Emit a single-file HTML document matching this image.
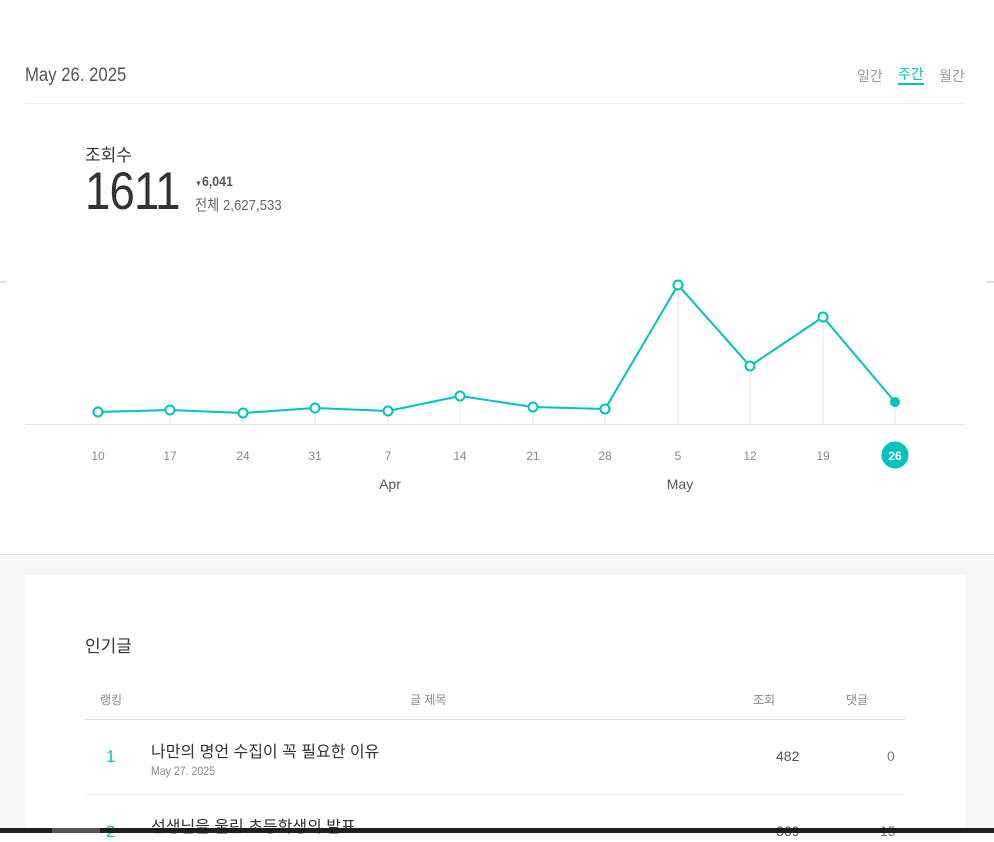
<!DOCTYPE html>
<html><head><meta charset="utf-8"><style>
*{margin:0;padding:0;box-sizing:border-box}
body{width:994px;height:833px;overflow:hidden;background:#fff;font-family:"Liberation Sans","Noto Sans CJK KR",sans-serif;position:relative;color:#333}
.a{position:absolute;white-space:nowrap}
.n{transform-origin:left top;transform:scaleX(0.88)}
</style></head><body>
<div class="a n" style="left:25px;top:65px;font-size:19px;color:#555">May 26. 2025</div>
<div class="a" style="left:857px;top:66px;font-size:14px;color:#999">일간</div>
<div class="a" style="left:898px;top:66px;font-size:14px;color:#00c3bd;border-bottom:2px solid #00c3bd;line-height:17px">주간</div>
<div class="a" style="left:939px;top:66px;font-size:14px;color:#999">월간</div>
<div class="a" style="left:25px;top:103px;width:940px;height:1px;background:#eee"></div>
<div class="a" style="left:85px;top:141px;font-size:17px;color:#333">조회수</div>
<div class="a" style="left:85px;top:161px;font-size:53px;color:#333;transform-origin:left top;transform:scaleX(0.86);letter-spacing:-1px">1611</div>
<div class="a n" style="left:195px;top:173px;font-size:14px;color:#555;font-weight:bold"><span style="font-size:8px">▼</span>6,041</div>
<div class="a n" style="left:195px;top:194px;font-size:15px;color:#666">전체 2,627,533</div>
<svg class="a" style="left:0;top:0" width="994" height="520">
<line x1="0" y1="282" x2="6" y2="282" stroke="#bbb"/>
<line x1="987" y1="282" x2="994" y2="282" stroke="#bbb"/>
<line x1="25" y1="424.5" x2="965" y2="424.5" stroke="#e5e5e5"/>
<g stroke="#e5e5e5">
<line x1="98" y1="412" x2="98" y2="424"/><line x1="170" y1="410" x2="170" y2="424"/><line x1="243" y1="413" x2="243" y2="424"/><line x1="315" y1="408" x2="315" y2="424"/><line x1="388" y1="411" x2="388" y2="424"/><line x1="460" y1="396" x2="460" y2="424"/><line x1="533" y1="407" x2="533" y2="424"/><line x1="605" y1="409" x2="605" y2="424"/><line x1="678" y1="285" x2="678" y2="424"/><line x1="750" y1="366" x2="750" y2="424"/><line x1="823" y1="317" x2="823" y2="424"/><line x1="895" y1="402" x2="895" y2="424"/>
</g>
<polyline fill="none" stroke="#00c3bd" stroke-width="2" points="98,412 170,410 243,413 315,408 388,411 460,396 533,407 605,409 678,285 750,366 823,317 895,402"/>
<g fill="#fff" stroke="#00c3bd" stroke-width="2">
<circle cx="98" cy="412" r="4.5"/><circle cx="170" cy="410" r="4.5"/><circle cx="243" cy="413" r="4.5"/><circle cx="315" cy="408" r="4.5"/><circle cx="388" cy="411" r="4.5"/><circle cx="460" cy="396" r="4.5"/><circle cx="533" cy="407" r="4.5"/><circle cx="605" cy="409" r="4.5"/><circle cx="678" cy="285" r="4.5"/><circle cx="750" cy="366" r="4.5"/><circle cx="823" cy="317" r="4.5"/>
</g>
<circle cx="895" cy="402" r="5" fill="#00c3bd"/>
<circle cx="895" cy="455" r="13.5" fill="#00c3bd"/>
<g font-family="Liberation Sans, sans-serif" font-size="12" fill="#888" text-anchor="middle">
<text x="98" y="460">10</text><text x="170" y="460">17</text><text x="243" y="460">24</text><text x="315" y="460">31</text><text x="388" y="460">7</text><text x="460" y="460">14</text><text x="533" y="460">21</text><text x="605" y="460">28</text><text x="678" y="460">5</text><text x="750" y="460">12</text><text x="823" y="460">19</text>
<text x="895" y="460" fill="#fff" font-weight="bold">26</text>
<text x="390" y="489" font-size="14" fill="#555">Apr</text><text x="680" y="489" font-size="14" fill="#555">May</text>
</g>
</svg>
<div class="a" style="left:0;top:554px;width:994px;height:279px;background:#f7f7f7;border-top:1px solid #ddd"></div>
<div class="a" style="left:25px;top:575px;width:940px;height:258px;background:#fff"></div>
<div class="a" style="left:85px;top:632px;font-size:17px;color:#333">인기글</div>
<div class="a" style="left:100px;top:691px;font-size:12px;color:#888">랭킹</div>
<div class="a" style="left:410px;top:691px;font-size:12px;color:#888">글 제목</div>
<div class="a" style="left:753px;top:691px;font-size:12px;color:#888">조회</div>
<div class="a" style="left:846px;top:691px;font-size:12px;color:#888">댓글</div>
<div class="a" style="left:85px;top:719px;width:820px;height:1px;background:#ddd"></div>
<div class="a" style="left:106px;top:747px;font-size:17px;color:#00c3bd">1</div>
<div class="a" style="left:151px;top:738px;font-size:16px;color:#333">나만의 명언 수집이 꼭 필요한 이유</div>
<div class="a n" style="left:151px;top:764px;font-size:12px;color:#888">May 27. 2025</div>
<div class="a" style="left:776px;top:748px;font-size:14px;color:#555">482</div>
<div class="a" style="left:887px;top:748px;font-size:14px;color:#777">0</div>
<div class="a" style="left:85px;top:794px;width:820px;height:1px;background:#eee"></div>
<div class="a" style="left:106px;top:822px;font-size:17px;color:#00c3bd">2</div>
<div class="a" style="left:151px;top:813px;font-size:16px;color:#333">선생님을 울린 초등학생의 발표</div>
<div class="a" style="left:776px;top:823px;font-size:14px;color:#555">369</div>
<div class="a" style="left:880px;top:823px;font-size:14px;color:#777">15</div>
<div class="a" style="left:0;top:828px;width:994px;height:5px;background:#1e1e1e"></div>
<div class="a" style="left:52px;top:828px;width:48px;height:5px;background:#555"></div>
</body></html>
